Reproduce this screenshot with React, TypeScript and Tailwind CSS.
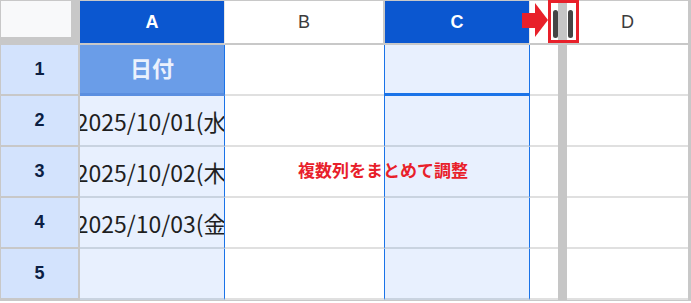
const font = "font-['Liberation_Sans','Noto_Sans_CJK_JP',sans-serif]";

const rows = [
  { n: '1', a: '日付', head: true },
  { n: '2', a: '2025/10/01(水)' },
  { n: '3', a: '2025/10/02(木)' },
  { n: '4', a: '2025/10/03(金)' },
  { n: '5', a: '' },
];

function HeaderRow() {
  return (
    <div className="flex h-[44px]">
      <div className="w-[79px] shrink-0 border-r-[9px] border-b-[8px] border-[#c8c8c8] bg-[#f8f9fa]" />
      <div className="w-[145px] shrink-0 border-r border-b-2 border-r-[#e6e6e6] border-b-[#c8c8c8] bg-[#0b57d0] flex items-center justify-center text-white font-bold text-[18px]">
        A
      </div>
      <div className="w-[160px] shrink-0 border-r-2 border-b-2 border-[#c8c8c8] bg-white flex items-center justify-center text-[#3c3c3c] text-[18px]">
        B
      </div>
      <div className="w-[145px] shrink-0 border-r border-b-2 border-r-[#e6e6e6] border-b-[#c8c8c8] bg-[#0b57d0] flex items-center justify-center text-white font-bold text-[18px]">
        C
      </div>
      <div className="w-[28px] shrink-0 border-b-2 border-[#c8c8c8] bg-white" />
      <div className="w-[9px] shrink-0 bg-[#c6c6c6]" />
      <div className="w-[121px] shrink-0 border-b-2 border-[#c8c8c8] bg-white flex items-center justify-center text-[#3c3c3c] text-[18px]">
        D
      </div>
    </div>
  );
}

function BodyRow({ n, a, head }: { n: string; a: string; head?: boolean }) {
  return (
    <div className="flex h-[51px]">
      <div className="w-[79px] shrink-0 border-r-2 border-b-2 border-[#c8c8c8] bg-[#d3e3fd] flex items-center justify-center text-[#0b1f44] font-bold text-[18px]">
        {n}
      </div>
      {head ? (
        <div className="w-[145px] shrink-0 border-r border-b-[3px] border-r-[#1a73e8] border-b-[#5b8fe0] bg-[#6a9de8] flex items-center justify-center text-[#eaf1fd] font-bold text-[22px]">
          {a}
        </div>
      ) : (
        <div className="w-[145px] shrink-0 border-r border-b-2 border-r-[#1a73e8] border-b-[#c9d3e0] bg-[#e8f0fe] flex items-center justify-center overflow-hidden whitespace-nowrap text-[#1f1f1f] text-[23px] font-['Noto_Sans_CJK_JP',sans-serif]">
          <span className="shrink-0 pt-[2px] pl-[6px]">{a}</span>
        </div>
      )}
      <div className="w-[159px] shrink-0 border-b-2 border-[#e0e0e0] bg-white" />
      {head ? (
        <div className="w-[146px] shrink-0 border-x border-b-[3px] border-[#1a73e8] bg-[#e8f0fe]" />
      ) : (
        <div className="w-[146px] shrink-0 border-x border-x-[#1a73e8] border-b-2 border-b-[#c9d3e0] bg-[#e8f0fe]" />
      )}
      <div className="w-[28px] shrink-0 border-b-2 border-[#e0e0e0] bg-white" />
      <div className="w-[9px] shrink-0 bg-[#c6c6c6]" />
      <div className="w-[121px] shrink-0 border-b-2 border-[#e0e0e0] bg-white" />
    </div>
  );
}

export default function App() {
  return (
    <div className={`relative w-[691px] h-[303px] bg-white ${font}`}>
      <div className="w-[691px] border-t border-l border-r-[3px] border-b border-[#c8c8c8]">
        <HeaderRow />
        {rows.map((r) => (
          <BodyRow key={r.n} n={r.n} a={r.a} head={r.head} />
        ))}
      </div>

      {/* annotation */}
      <div className="absolute left-[298px] top-[159px] text-[#e8202a] font-bold text-[17px] leading-[22px] whitespace-nowrap font-['Noto_Sans_CJK_JP',sans-serif]">
        複数列をまとめて調整
      </div>

      <svg className="absolute left-[522px] top-[3px]" width="26" height="34" viewBox="0 0 26 34">
        <rect x="0" y="10" width="14" height="15" fill="#e8202a" />
        <polygon points="13,0 26,17 13,34" fill="#e8202a" />
      </svg>

      <div className="absolute left-[548px] top-0 w-[31px] h-[43px] border-[3px] border-[#e8202a]" />
      <div className="absolute left-[553px] top-[10px] w-[5px] h-[28px] rounded-full bg-[#454545]" />
      <div className="absolute left-[568px] top-[10px] w-[5px] h-[28px] rounded-full bg-[#454545]" />
    </div>
  );
}
